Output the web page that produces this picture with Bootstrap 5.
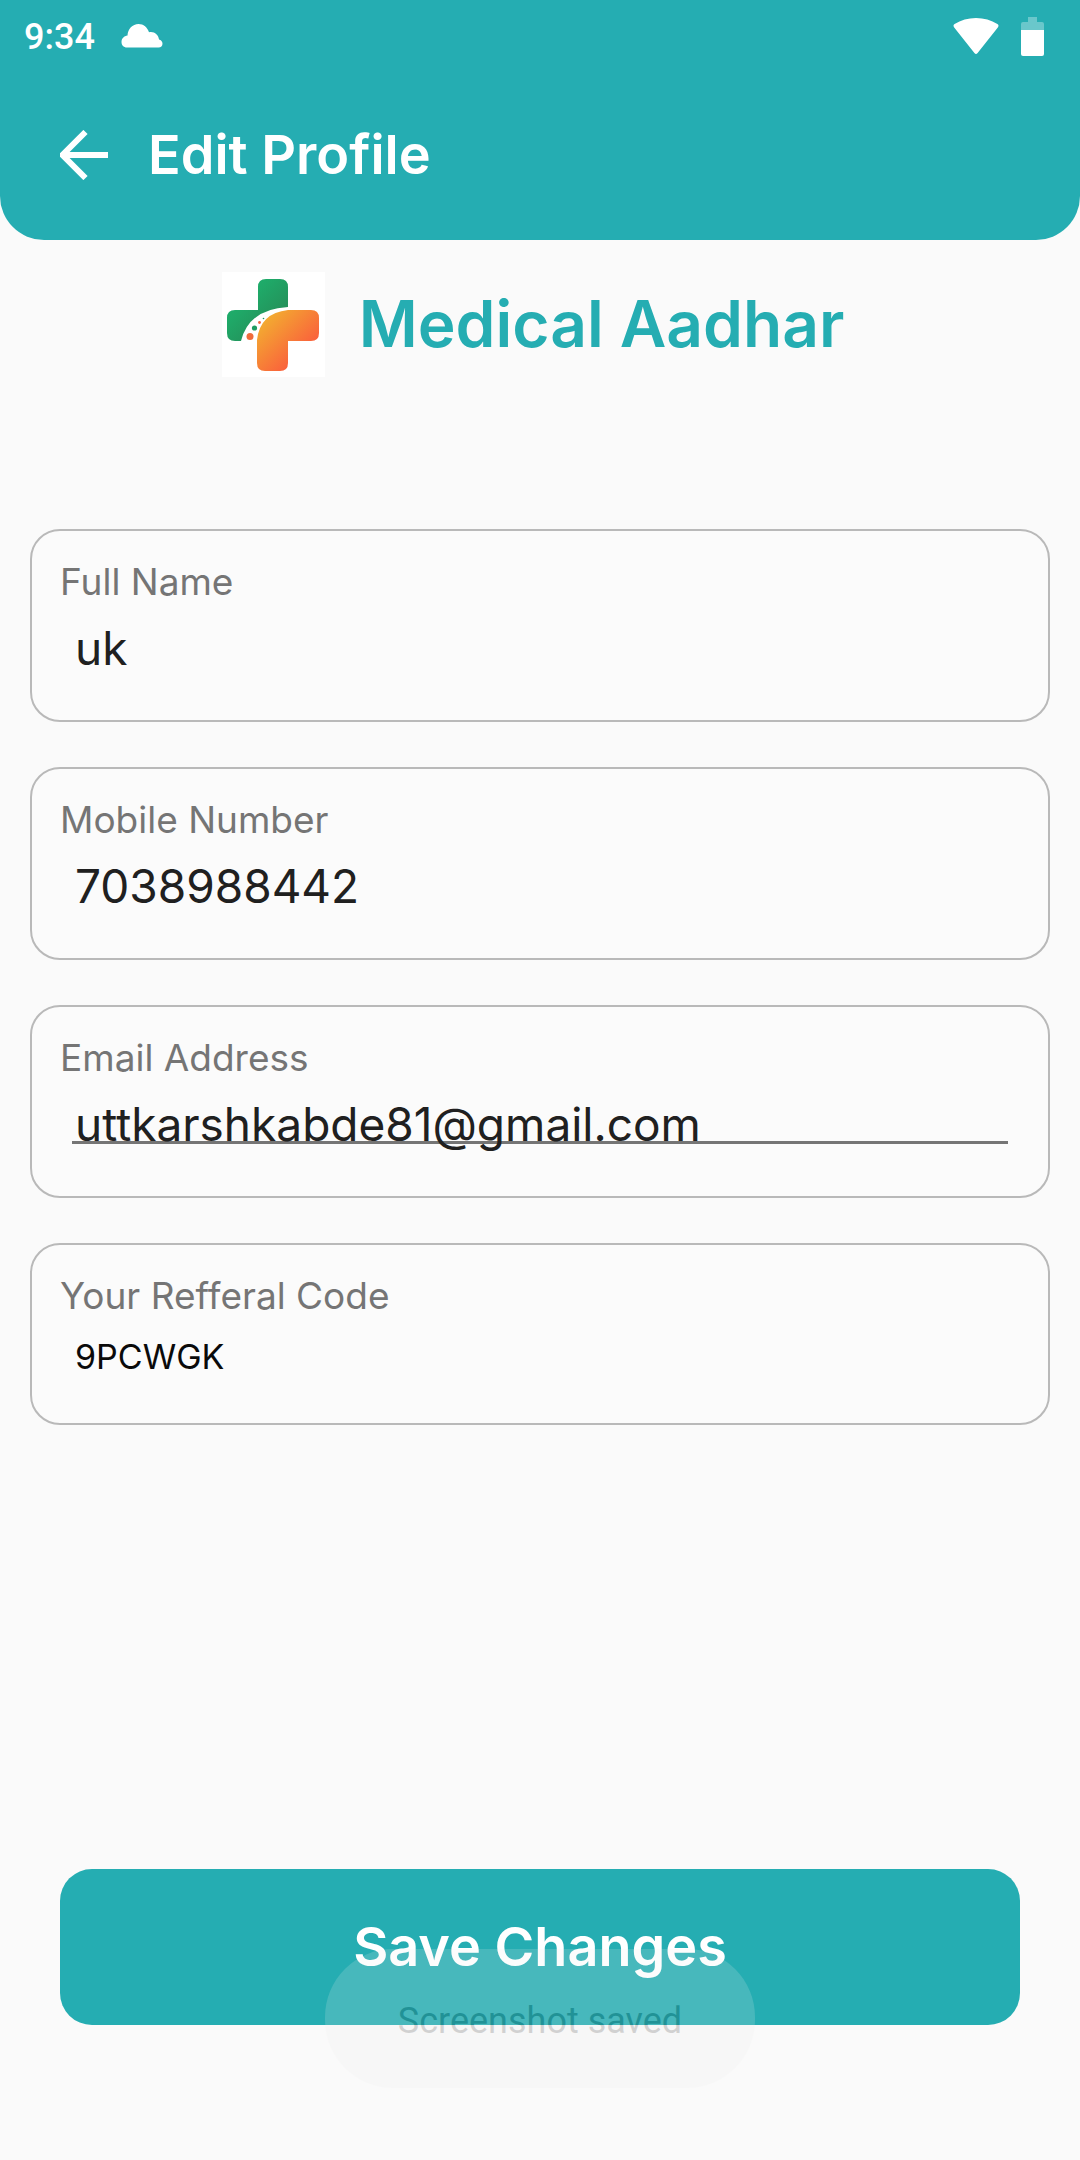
<!DOCTYPE html>
<html lang="en">
<head>
<meta charset="utf-8">
<meta name="viewport" content="width=device-width, initial-scale=1">
<title>Edit Profile</title>
<link href="https://cdn.jsdelivr.net/npm/bootstrap@5.3.0/dist/css/bootstrap.min.css" rel="stylesheet">
<style>
  :root { --teal: #25adb2; }
  body { background: #fafafa; font-family: Inter, "Open Sans", sans-serif; color: #202020; }
  .app-header { background: var(--teal); border-radius: 0 0 44px 44px; height: 240px; }
  .status-bar { height: 72px; padding: 0 36px 0 24px; font: 500 36px/72px Roboto, sans-serif; }
  .clock { padding-top: 2px; }
  .cloud { margin-left: 26px; }
  .battery { margin-left: 22px; }
  .title-bar { padding: 41px 60px 0; gap: 40px; }
  .title-bar h1 { font-size: 54px; line-height: 84px; font-weight: 600; }
  .brand { padding: 32px 14px 0 0; gap: 34px; height: 289px; }
  .brand h2 { font-size: 64px; line-height: 104px; font-weight: 600; color: var(--teal); }
  .field-list { padding: 0 30px; gap: 45px; }
  .field-box { border: 2px solid #b9b9b9; border-radius: 30px; background: #fbfbfb; padding: 27px 40px 0 28px; height: 193px; }
  .field-box label { font-size: 37px; line-height: 48px; color: #757575; }
  .field-box .form-control { margin-left: 12px; padding: 8px 4px 0 3px; width: auto; flex: none; font-size: 46px; line-height: 60px; height: 76px; color: #202020; background-color: transparent; }
  .field-box .underlined { background: linear-gradient(#757575, #757575) 0 59px / 100% 3px no-repeat; }
  .field-box.compact { height: 182px; }
  .field-box.compact .form-control { padding-top: 1px; font-size: 34px; height: 72px; color: #0a0a0a; }
  .save-area { padding: 0 60px 135px; }
  .btn-save { --bs-btn-color: #fff; --bs-btn-bg: var(--teal); --bs-btn-hover-color: #fff; --bs-btn-hover-bg: #1f989c; border: 0; border-radius: 32px; height: 156px; font-size: 54px; line-height: 84px; font-weight: 600; }
  .saved-toast { left: 50%; transform: translateX(-50%); bottom: 72px; width: 430px; height: 139px; border-radius: 68px; background: #eee; color: #101010; opacity: .17; font: 400 36px/144px Roboto, sans-serif; }
</style>
</head>
<body>
<div class="d-flex flex-column min-vh-100 position-relative">
  <header class="app-header text-white">
    <div class="status-bar d-flex align-items-center">
      <span class="clock">9:34</span>
      <svg class="cloud" width="42" height="26" viewBox="0 0 42 26" fill="#fff" aria-hidden="true"><path d="M6 24.500C2.500 24.500.5 22 .5 19.000C.5 15.500 3 13 6.500 12.500C6.800 6 11.500 1 17.500 1C22.500 1 26.500 4.500 28 9.200C33 8 37.500 11.500 38 16.500C40 16.900 41.500 18.500 41.500 20.700C41.500 23 40 24.500 37.500 24.500Z"/></svg>
      <svg class="ms-auto" width="46" height="38" viewBox="0 0 46 38" fill="#fff" aria-hidden="true"><path d="M1.200 10.500Q-.4 8.500 1.600 7Q11 1 23 1T44.400 7Q46.400 8.500 44.800 10.500L24.600 36Q23 38 21.400 36Z"/></svg>
      <svg class="battery" width="23" height="39" viewBox="0 0 23 39" aria-hidden="true"><path d="M7 0h9v5h5q2 0 2 2v6H0V7q0-2 2-2h5z" fill="#6ac7cb"/><path d="M0 13h23v24q0 2-2 2H2q-2 0-2-2z" fill="#fff"/></svg>
    </div>
    <div class="title-bar d-flex align-items-center">
      <a href="#" class="d-flex" aria-label="Back"><svg width="48" height="50" viewBox="0 0 48 50" fill="none" stroke="#fff" stroke-width="6" aria-hidden="true"><path d="M48 25H4M25.500 2L2.500 25l23 23"/></svg></a>
      <h1 class="m-0">Edit Profile</h1>
    </div>
  </header>

  <section class="brand d-flex justify-content-center align-items-start">
    <svg width="103" height="105" viewBox="0 0 103 105" role="img" aria-label="Medical Aadhar logo">
      <defs>
        <linearGradient id="leaf" x1="0" y1="0" x2="1" y2="1"><stop offset="0" stop-color="#18b873"/><stop offset=".35" stop-color="#1fa968"/><stop offset="1" stop-color="#287f50"/></linearGradient>
        <linearGradient id="sun" x1="0" y1="0" x2="1" y2="1"><stop offset=".15" stop-color="#f3aa31"/><stop offset=".75" stop-color="#fa5e3c"/></linearGradient>
      </defs>
      <path fill="#fff" d="M0 0h103v105H0z"/>
      <path fill="url(#leaf)" d="M36 15q0-8 8-8h14q8 0 8 8v20Q27 37 19 69h-6q-8 0-8-8V46q0-8 8-8h23z"/>
      <path fill="url(#sun)" d="M66 38h23q8 0 8 8v15q0 8-8 8H66v22q0 8-8 8H43q-8 0-8-8V68Q38 41 66 38z"/>
      <circle cx="28" cy="64.500" r="3.500" fill="#f06c3c"/><circle cx="32.500" cy="56" r="2.600" fill="#1d9c62"/><circle cx="37.500" cy="50.500" r="1.400" fill="#ef6440"/><circle cx="41.500" cy="46.500" r=".8" fill="#1d9c62"/>
    </svg>
    <h2 class="m-0">Medical Aadhar</h2>
  </section>

  <form class="d-flex flex-column flex-grow-1">
    <div class="field-list d-flex flex-column">
      <div class="field-box d-flex flex-column">
        <label for="fullName">Full Name</label>
        <input id="fullName" type="text" class="form-control border-0 shadow-none rounded-0" value="uk">
      </div>
      <div class="field-box d-flex flex-column">
        <label for="mobile">Mobile Number</label>
        <input id="mobile" type="tel" class="form-control border-0 shadow-none rounded-0" value="7038988442">
      </div>
      <div class="field-box d-flex flex-column">
        <label for="email">Email Address</label>
        <input id="email" type="email" class="form-control underlined border-0 shadow-none rounded-0" value="uttkarshkabde81@gmail.com">
      </div>
      <div class="field-box compact d-flex flex-column">
        <label for="referral">Your Refferal Code</label>
        <input id="referral" type="text" class="form-control border-0 shadow-none rounded-0" value="9PCWGK" readonly>
      </div>
    </div>
    <div class="save-area mt-auto">
      <button type="submit" class="btn btn-save w-100">Save Changes</button>
    </div>
  </form>
  <div class="saved-toast position-absolute text-center pe-none" role="status">Screenshot saved</div>
</div>
<script src="https://cdn.jsdelivr.net/npm/bootstrap@5.3.0/dist/js/bootstrap.bundle.min.js"></script>
</body>
</html>
